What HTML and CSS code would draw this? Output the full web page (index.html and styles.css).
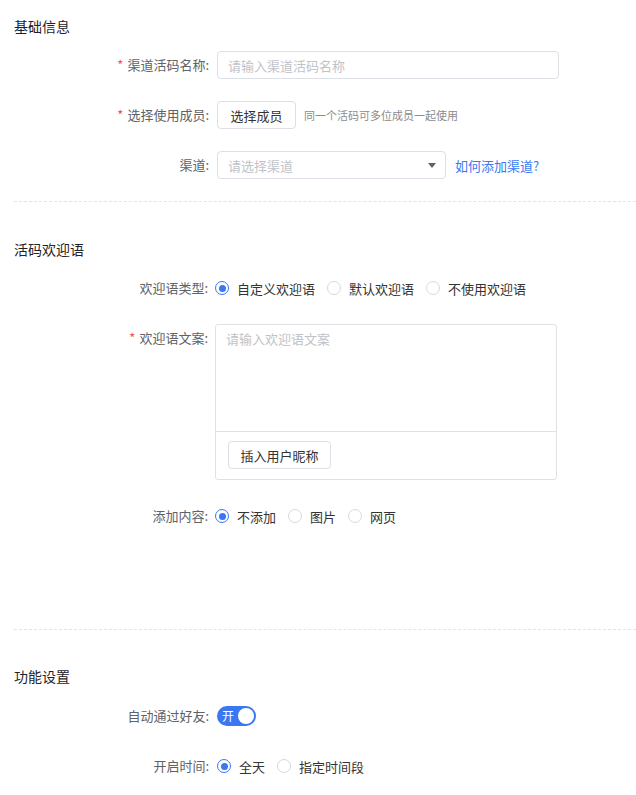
FILE: index.html
```html
<!DOCTYPE html>
<html lang="zh-CN">
<head>
<meta charset="utf-8">
<title>渠道活码</title>
<link rel="stylesheet" href="styles.css">
</head>
<body>
<div class="page">
  <section class="section">
    <div class="title">基础信息</div>
    <div class="row">
      <div class="label"><span class="req">*</span>渠道活码名称:</div>
      <div class="input input-name"><span class="ph">请输入渠道活码名称</span></div>
    </div>
    <div class="row">
      <div class="label"><span class="req">*</span>选择使用成员:</div>
      <button class="btn">选择成员</button>
      <span class="hint">同一个活码可多位成员一起使用</span>
    </div>
    <div class="row">
      <div class="label">渠道:</div>
      <div class="input select"><span class="ph">请选择渠道</span><span class="caret"></span></div>
      <a class="link">如何添加渠道?</a>
    </div>
  </section>
  <div class="divider"></div>
  <section class="section">
    <div class="title">活码欢迎语</div>
    <div class="row row-b">
      <div class="label label-b">欢迎语类型:</div>
      <div class="radios">
        <label class="radio on"><span class="dot"></span>自定义欢迎语</label>
        <label class="radio"><span class="dot"></span>默认欢迎语</label>
        <label class="radio"><span class="dot"></span>不使用欢迎语</label>
      </div>
    </div>
    <div class="row row-b row-top">
      <div class="label label-b label-top"><span class="req">*</span>欢迎语文案:</div>
      <div class="textbox">
        <div class="textarea"><span class="ph">请输入欢迎语文案</span></div>
        <div class="textbar"><button class="btn btn-insert">插入用户昵称</button></div>
      </div>
    </div>
    <div class="row row-b row-add">
      <div class="label label-b">添加内容:</div>
      <div class="radios">
        <label class="radio on"><span class="dot"></span>不添加</label>
        <label class="radio"><span class="dot"></span>图片</label>
        <label class="radio"><span class="dot"></span>网页</label>
      </div>
    </div>
  </section>
  <div class="divider divider-2"></div>
  <section class="section">
    <div class="title title-3">功能设置</div>
    <div class="row">
      <div class="label">自动通过好友:</div>
      <span class="switch"><span class="switch-text">开</span><span class="knob"></span></span>
    </div>
    <div class="row">
      <div class="label">开启时间:</div>
      <div class="radios">
        <label class="radio on"><span class="dot"></span>全天</label>
        <label class="radio"><span class="dot"></span>指定时间段</label>
      </div>
    </div>
  </section>
</div>
</body>
</html>
```

FILE: styles.css
```css
* { box-sizing: border-box; }
html, body { margin: 0; padding: 0; background: #fff; }
body {
  font-family: "Noto Sans CJK SC", "Microsoft YaHei", sans-serif;
  font-size: 13px;
  color: #333;
}
.page { padding-left: 14px; width: 636px; }
.section { display: flex; flex-direction: column; }
.title {
  font-size: 14px;
  line-height: 20px;
  height: 20px;
  color: #1f2329;
  margin-top: 16px;
  margin-bottom: 15px;
}
.title-3 { margin-bottom: 16px; }
.row {
  display: flex;
  align-items: center;
  height: 28px;
  margin-bottom: 22px;
}
.label {
  width: 195px;
  margin-right: 8px;
  text-align: right;
  color: #606266;
  font-size: 13px;
  line-height: 28px;
  white-space: nowrap;
}
.label-b { width: 194px; margin-right: 7px; }
.req { color: #f5504f; margin-right: 4px; }
.input {
  height: 28px;
  border: 1px solid #dcdfe6;
  border-radius: 4px;
  display: flex;
  align-items: center;
  padding: 0 10px;
  background: #fff;
}
.input-name { width: 342px; }
.select { width: 229px; justify-content: space-between; padding-right: 9px; }
.ph { color: #bfc3c9; font-size: 13px; }
.caret {
  width: 0; height: 0;
  border-left: 4px solid transparent;
  border-right: 4px solid transparent;
  border-top: 5px solid #606266;
}
.btn {
  font-family: inherit;
  font-size: 13px;
  color: #333;
  background: #fff;
  border: 1px solid #dcdfe6;
  border-radius: 4px;
  height: 28px;
  width: 79px;
  padding: 0;
  cursor: pointer;
}
.hint { margin-left: 8px; font-size: 11px; color: #8c8c8c; }
.link { margin-left: 9px; color: #3a78f2; font-size: 13px; cursor: pointer; }
.divider {
  height: 0;
  border-top: 1px dashed #e2e4e8;
  margin-top: 0;
  margin-bottom: 21px;
}
.divider-2 { margin-top: 99px; margin-bottom: 20px; }
.row-b { margin-bottom: 22px; }
.row-top { align-items: flex-start; height: auto; margin-bottom: 22px; }
.row-add { margin-bottom: 0; }
.radios { display: flex; align-items: center; }
.radio {
  display: flex;
  align-items: center;
  margin-right: 12px;
  color: #333;
  font-size: 13px;
  cursor: pointer;
}
.dot {
  width: 14px; height: 14px;
  border: 1px solid #d7d9dd;
  border-radius: 50%;
  margin-right: 8px;
  background: #fff;
  position: relative;
}
.radio.on .dot { border-color: #3a78f2; border-width: 1.5px; }
.radio.on .dot::after {
  content: "";
  position: absolute;
  left: 50%; top: 50%;
  width: 7px; height: 7px;
  margin: -3.5px 0 0 -3.5px;
  border-radius: 50%;
  background: #3a78f2;
}
.textbox {
  width: 342px;
  height: 156px;
  border: 1px solid #dfe1e5;
  border-radius: 3px;
  display: flex;
  flex-direction: column;
}
.textarea {
  height: 107px;
  padding: 6px 10px;
  line-height: 16px;
  border-bottom: 1px solid #dfe1e5;
}
.textbar { padding: 9px 12px; }
.btn-insert { width: 103px; }
.switch {
  position: relative;
  display: inline-flex;
  align-items: center;
  width: 39px;
  height: 20px;
  border-radius: 10px;
  background: #3a78f2;
}
.switch-text { color: #fff; font-size: 12px; margin-left: 5px; line-height: 20px; }
.knob {
  position: absolute;
  right: 2px; top: 2px;
  width: 16px; height: 16px;
  border-radius: 50%;
  background: #fff;
}
```
